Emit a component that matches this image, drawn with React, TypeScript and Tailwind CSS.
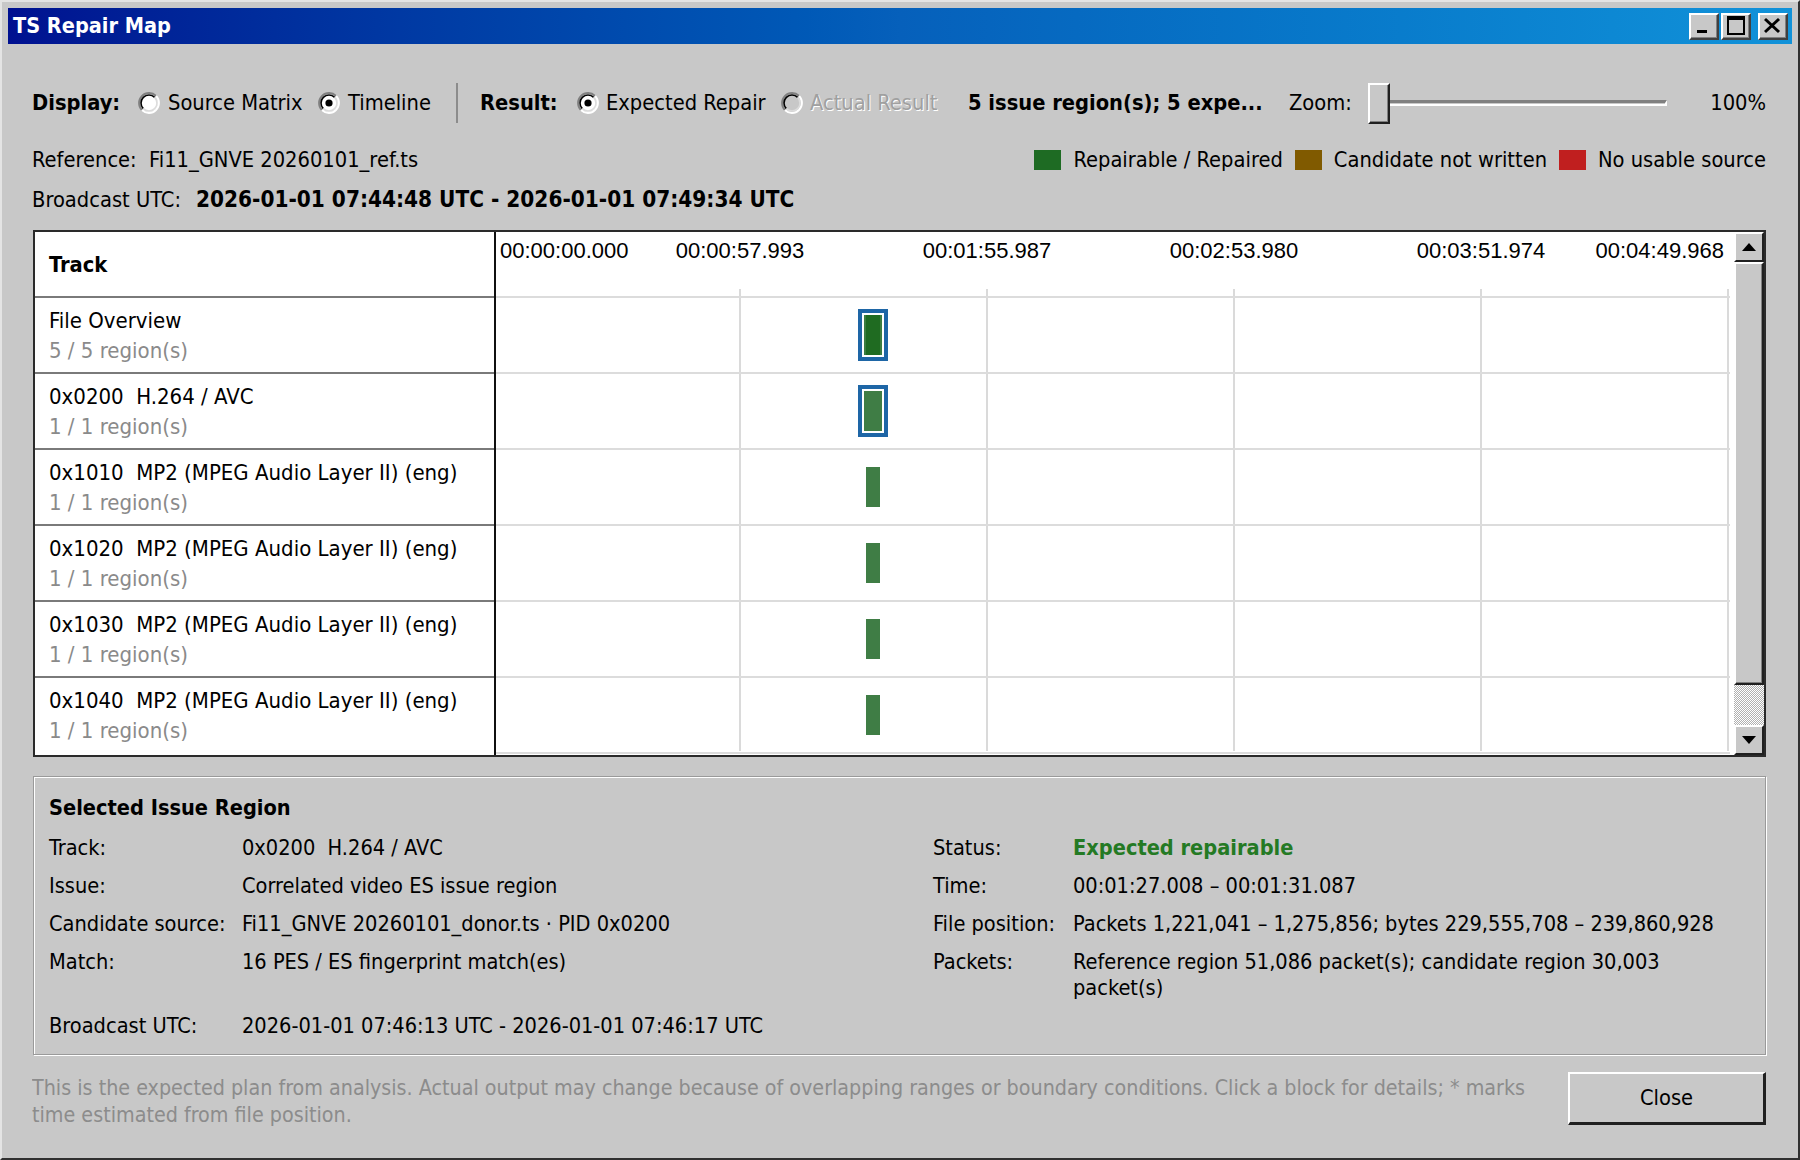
import React from "react";

function Radio({ checked, disabled }: { checked?: boolean; disabled?: boolean }) {
  return (
    <svg width="22" height="22" viewBox="0 0 22 22" className="shrink-0">
      <circle cx="11" cy="11" r="9" fill={disabled ? "#c8c8c8" : "#ffffff"} />
      <path d="M3.93 18.07 A10 10 0 0 1 18.07 3.93" fill="none" stroke="#808080" strokeWidth="2" />
      <path d="M18.07 3.93 A10 10 0 0 1 3.93 18.07" fill="none" stroke="#ffffff" strokeWidth="2" />
      <path d="M5.34 16.66 A8 8 0 0 1 16.66 5.34" fill="none" stroke="#000000" strokeWidth="1.6" />
      <path d="M16.66 5.34 A8 8 0 0 1 5.34 16.66" fill="none" stroke="#dcdcdc" strokeWidth="1.6" />
      {checked && <circle cx="11" cy="11" r="3.6" fill="#000000" />}
    </svg>
  );
}

function TitleButton({ kind }: { kind: "min" | "max" | "close" }) {
  return (
    <div className="w-[30px] h-[27px] bg-[#c8c8c8] border-t-2 border-l-2 border-t-white border-l-white border-r-2 border-b-2 border-r-[#404040] border-b-[#404040] shadow-[inset_-1px_-1px_0_#808080] flex items-center justify-center">
      <svg width="26" height="23" viewBox="0 0 26 23">
        {kind === "min" && <rect x="6" y="15" width="10" height="3" fill="#000" />}
        {kind === "max" && (
          <g>
            <rect x="5" y="2" width="16" height="17" fill="none" stroke="#000" strokeWidth="2" />
            <rect x="5" y="2" width="16" height="3" fill="#000" />
          </g>
        )}
        {kind === "close" && (
          <g stroke="#000" strokeWidth="3">
            <line x1="5" y1="4" x2="19" y2="17" />
            <line x1="19" y1="4" x2="5" y2="17" />
          </g>
        )}
      </svg>
    </div>
  );
}

const tracks = [
  { name: "File Overview", count: "5 / 5 region(s)", kind: "overview" },
  { name: "0x0200  H.264 / AVC", count: "1 / 1 region(s)", kind: "selected" },
  { name: "0x1010  MP2 (MPEG Audio Layer II) (eng)", count: "1 / 1 region(s)", kind: "plain" },
  { name: "0x1020  MP2 (MPEG Audio Layer II) (eng)", count: "1 / 1 region(s)", kind: "plain" },
  { name: "0x1030  MP2 (MPEG Audio Layer II) (eng)", count: "1 / 1 region(s)", kind: "plain" },
  { name: "0x1040  MP2 (MPEG Audio Layer II) (eng)", count: "1 / 1 region(s)", kind: "plain" },
];

const gridXs = [244, 491, 738, 985, 1232];

function Bar({ kind }: { kind: string }) {
  if (kind === "plain") {
    return <div className="absolute left-[370px] top-[17px] w-[14px] h-[40px] bg-[#3f7d45]" />;
  }
  return (
    <div className="absolute left-[362px] top-[11px] w-[30px] h-[52px] border-4 border-[#1e66a6] bg-white p-[2px]">
      {kind === "overview" ? (
        <div className="w-full h-full bg-[#1f6b21] border-x-2 border-[#3b7d40]" />
      ) : (
        <div className="w-full h-full bg-[#3f7d45]" />
      )}
    </div>
  );
}

export default function App() {
  return (
    <div className="w-[1800px] h-[1160px] overflow-hidden bg-[#c8c8c8] border-2 border-t-[#e4e4e4] border-l-[#e4e4e4] border-r-[#303030] border-b-[#303030] p-[6px] font-['DejaVu_Sans_Condensed','DejaVu_Sans',sans-serif] text-[21.7px] text-black [font-stretch:semi-condensed]">
      {/* Title bar */}
      <div className="h-[36px] flex items-center justify-between bg-gradient-to-r from-[#001090] via-[#0660bb] to-[#1192d9] pl-[5px] pr-[4px]">
        <span className="text-white font-bold text-[21.5px] leading-none">TS Repair Map</span>
        <div className="flex items-center">
          <TitleButton kind="min" />
          <div className="w-[2px]" />
          <TitleButton kind="max" />
          <div className="w-[7px]" />
          <TitleButton kind="close" />
        </div>
      </div>

      <div className="pl-[24px] pr-[26px]">
        {/* Row 1 */}
        <div className="mt-[35px] h-[48px] flex items-center whitespace-nowrap">
          <div className="w-[106px] font-bold">Display:</div>
          <div className="w-[180px] flex items-center gap-[8px]">
            <Radio />
            <span>Source Matrix</span>
          </div>
          <div className="w-[138px] flex items-center gap-[8px]">
            <Radio checked />
            <span>Timeline</span>
          </div>
          <div className="w-[2px] h-[40px] bg-[#8c8c8c]" />
          <div className="w-[22px]" />
          <div className="w-[97px] font-bold">Result:</div>
          <div className="w-[204px] flex items-center gap-[7px]">
            <Radio checked />
            <span>Expected Repair</span>
          </div>
          <div className="w-[187px] flex items-center gap-[7px]">
            <Radio disabled />
            <span className="text-[#a0a0a0] [text-shadow:1px_1px_0_#ffffff]">Actual Result</span>
          </div>
          <div className="w-[321px] font-bold overflow-hidden">5 issue region(s); 5 expe...</div>
          <div className="w-[79px]">Zoom:</div>
          <div className="w-[299px] h-[42px] flex items-center">
            <div className="w-[22px] h-[41px] shrink-0 bg-[#c8c8c8] border-t-2 border-l-2 border-t-white border-l-white border-r-2 border-b-2 border-r-[#202020] border-b-[#202020] shadow-[inset_-1px_-1px_0_#808080]" />
            <div className="flex-1 h-[6px] border-t-[3px] border-[#808080] border-b-2 border-b-white border-r-2 border-r-white" />
          </div>
          <div className="flex-1 text-right">100%</div>
        </div>

        {/* Row 2 */}
        <div className="mt-[19px] h-[28px] flex items-center justify-between whitespace-nowrap">
          <div className="whitespace-pre">Reference:  Fi11_GNVE 20260101_ref.ts</div>
          <div className="flex items-center">
            <div className="w-[27px] h-[20px] bg-[#1e6b23]" />
            <span className="ml-[12px] mr-[12px]">Repairable / Repaired</span>
            <div className="w-[27px] h-[20px] bg-[#805a00]" />
            <span className="ml-[12px] mr-[12px]">Candidate not written</span>
            <div className="w-[27px] h-[20px] bg-[#c01f1f]" />
            <span className="ml-[12px]">No usable source</span>
          </div>
        </div>

        {/* Row 3 */}
        <div className="mt-[12px] h-[28px] flex items-center whitespace-nowrap">
          <div className="w-[164px]">Broadcast UTC:</div>
          <div className="font-bold text-[22.4px]">2026-01-01 07:44:48 UTC - 2026-01-01 07:49:34 UTC</div>
        </div>

        {/* Table */}
        <div className="mt-[16px] ml-[1px] h-[527px] border-2 border-[#2a2a2a] bg-white flex">
          {/* Track column */}
          <div className="w-[461px] shrink-0 border-r-2 border-[#101010] flex flex-col">
            <div className="h-[66px] border-b-2 border-[#7a7a7a] flex items-center pl-[14px] pt-[3px] font-bold">Track</div>
            {tracks.map((t, i) => (
              <div
                key={i}
                className={
                  i < tracks.length - 1
                    ? "h-[76px] border-b-2 border-[#7a7a7a] pl-[14px] pt-[8px] leading-[30px] whitespace-nowrap text-[22px]"
                    : "flex-1 pl-[14px] pt-[8px] leading-[30px] whitespace-nowrap text-[22px]"
                }
              >
                <div className="whitespace-pre">{t.name}</div>
                <div className="text-[#8a8a8a]">{t.count}</div>
              </div>
            ))}
          </div>

          {/* Timeline column */}
          <div className="flex-1 relative">
            <div className="absolute inset-0 pointer-events-none">
              {gridXs.map((x) => (
                <div key={x} className="absolute top-[57px] bottom-[4px] w-[2px] bg-[#dadada]" style={{ left: x - 1 }} />
              ))}
            </div>
            <div className="relative w-[1234px] h-[66px] border-b-2 border-[#dcdcdc] font-['Liberation_Sans',Arial,sans-serif] text-[22px] leading-[24px] [font-stretch:normal]">
              <span className="absolute left-[4px] top-[7px]">00:00:00.000</span>
              <span className="absolute left-[174px] top-[7px] w-[140px] text-center">00:00:57.993</span>
              <span className="absolute left-[421px] top-[7px] w-[140px] text-center">00:01:55.987</span>
              <span className="absolute left-[668px] top-[7px] w-[140px] text-center">00:02:53.980</span>
              <span className="absolute left-[915px] top-[7px] w-[140px] text-center">00:03:51.974</span>
              <span className="absolute right-[6px] top-[7px]">00:04:49.968</span>
            </div>
            {tracks.map((t, i) => (
              <div key={i} className="relative w-[1234px] h-[76px] border-b-2 border-[#dcdcdc]">
                <Bar kind={t.kind} />
              </div>
            ))}
          </div>

          {/* Scrollbar */}
          <div className="w-[30px] shrink-0 flex flex-col bg-[#c8c8c8]">
            <div className="h-[30px] bg-[#c8c8c8] border-t-2 border-l-2 border-t-white border-l-white border-r-2 border-b-2 border-r-[#202020] border-b-[#202020] flex items-center justify-center">
              <svg width="14" height="8" viewBox="0 0 14 8"><polygon points="0,8 14,8 7,0" fill="#000" /></svg>
            </div>
            <div className="h-[423px] bg-[#c8c8c8] border-t-2 border-l-2 border-t-white border-l-white border-r-2 border-b-2 border-r-[#202020] border-b-[#202020] shadow-[inset_-1px_-1px_0_#808080]" />
            <div className="flex-1 bg-[repeating-conic-gradient(#ffffff_0%_25%,#b0b0b0_0%_50%)] bg-[length:2px_2px]" />
            <div className="h-[30px] bg-[#c8c8c8] border-t-2 border-l-2 border-t-white border-l-white border-r-2 border-b-2 border-r-[#202020] border-b-[#202020] flex items-center justify-center">
              <svg width="14" height="8" viewBox="0 0 14 8"><polygon points="0,0 14,0 7,8" fill="#000" /></svg>
            </div>
          </div>
        </div>

        {/* Detail panel */}
        <div className="mt-[19px] ml-[1px] h-[279px] border border-[#9a9a9a] shadow-[inset_1px_1px_0_#ffffff,1px_1px_0_#ffffff] pl-[15px] pt-[18px] pr-[10px] text-[21.6px]">
          <div className="font-bold leading-[26px]">Selected Issue Region</div>
          <div className="mt-[14px] grid grid-cols-[193px_691px_140px_1fr] gap-y-[12px] leading-[26px] whitespace-nowrap">
            <div>Track:</div>
            <div className="whitespace-pre">0x0200  H.264 / AVC</div>
            <div>Status:</div>
            <div className="font-bold text-[#247a24]">Expected repairable</div>

            <div>Issue:</div>
            <div>Correlated video ES issue region</div>
            <div>Time:</div>
            <div>00:01:27.008 – 00:01:31.087</div>

            <div>Candidate source:</div>
            <div>Fi11_GNVE 20260101_donor.ts · PID 0x0200</div>
            <div>File position:</div>
            <div>Packets 1,221,041 – 1,275,856; bytes 229,555,708 – 239,860,928</div>

            <div>Match:</div>
            <div>16 PES / ES fingerprint match(es)</div>
            <div>Packets:</div>
            <div>
              Reference region 51,086 packet(s); candidate region 30,003
              <br />
              packet(s)
            </div>

            <div>Broadcast UTC:</div>
            <div>2026-01-01 07:46:13 UTC - 2026-01-01 07:46:17 UTC</div>
            <div />
            <div />
          </div>
        </div>

        {/* Footer */}
        <div className="mt-[17px] flex items-start justify-between gap-[20px]">
          <div className="flex-1 min-w-0 pt-[2px] text-[#8c8c8c] text-[21.3px] leading-[27px] whitespace-nowrap overflow-hidden">
            This is the expected plan from analysis. Actual output may change because of overlapping ranges or boundary conditions. Click a block for details; * marks
            <br />
            time estimated from file position.
          </div>
          <div className="w-[198px] h-[53px] shrink-0 bg-[#c8c8c8] border-t-2 border-l-2 border-t-white border-l-white border-r-[3px] border-b-[3px] border-r-[#202020] border-b-[#202020] flex items-center justify-center">
            Close
          </div>
        </div>
      </div>
    </div>
  );
}
